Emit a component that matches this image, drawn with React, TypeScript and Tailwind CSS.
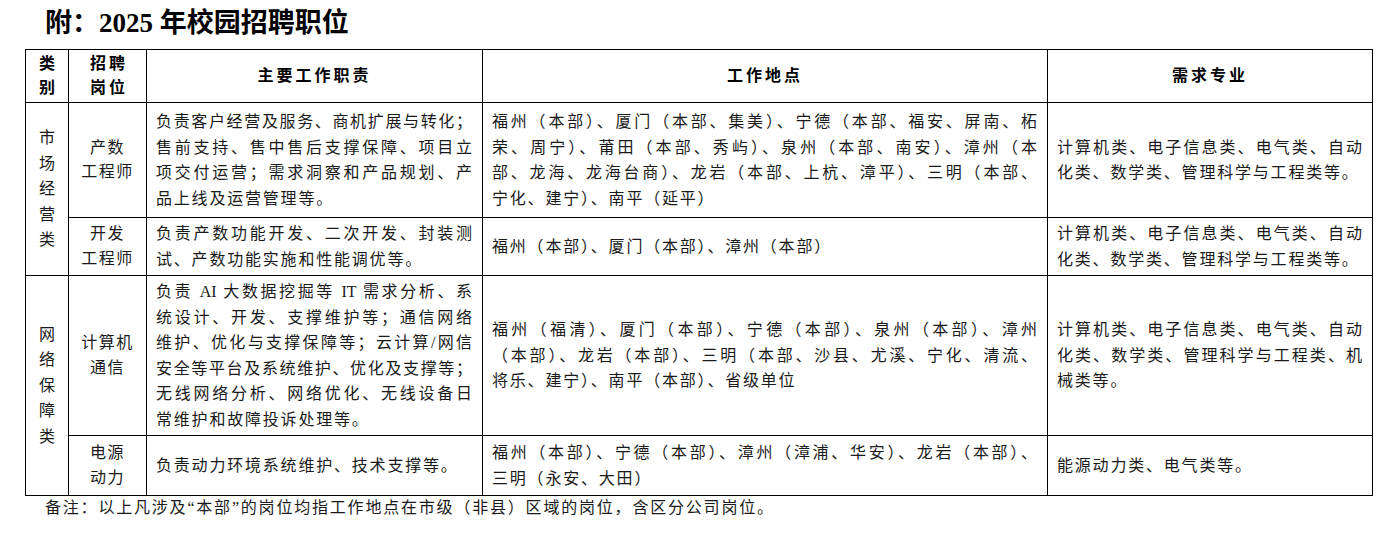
const serif = "font-['Liberation_Serif','Noto_Sans_CJK_SC',serif]";

type Row = {
  cat?: { text: string; span: number };
  pos: string[];
  duty: string[];
  place: string[];
  major: string[];
  h: string;
};

const majorsA = ["计算机类、电子信息类、电气类、自动", "化类、数学类、管理科学与工程类等。"];

const rows: Row[] = [
  {
    cat: { text: "市场经营类", span: 2 },
    pos: ["产数", "工程师"],
    duty: [
      "负责客户经营及服务、商机扩展与转化；",
      "售前支持、售中售后支撑保障、项目立",
      "项交付运营；需求洞察和产品规划、产",
      "品上线及运营管理等。",
    ],
    place: [
      "福州（本部）、厦门（本部、集美）、宁德（本部、福安、屏南、柘",
      "荣、周宁）、莆田（本部、秀屿）、泉州（本部、南安）、漳州（本",
      "部、龙海、龙海台商）、龙岩（本部、上杭、漳平）、三明（本部、",
      "宁化、建宁）、南平（延平）",
    ],
    major: majorsA,
    h: "h-[115px]",
  },
  {
    pos: ["开发", "工程师"],
    duty: ["负责产数功能开发、二次开发、封装测", "试、产数功能实施和性能调优等。"],
    place: ["福州（本部）、厦门（本部）、漳州（本部）"],
    major: majorsA,
    h: "h-[58px]",
  },
  {
    cat: { text: "网络保障类", span: 2 },
    pos: ["计算机", "通信"],
    duty: [
      "负责 AI 大数据挖掘等 IT 需求分析、系",
      "统设计、开发、支撑维护等；通信网络",
      "维护、优化与支撑保障等；云计算/网信",
      "安全等平台及系统维护、优化及支撑等；",
      "无线网络分析、网络优化、无线设备日",
      "常维护和故障投诉处理等。",
    ],
    place: [
      "福州（福清）、厦门（本部）、宁德（本部）、泉州（本部）、漳州",
      "（本部）、龙岩（本部）、三明（本部、沙县、尤溪、宁化、清流、",
      "将乐、建宁）、南平（本部）、省级单位",
    ],
    major: [
      "计算机类、电子信息类、电气类、自动",
      "化类、数学类、管理科学与工程类、机",
      "械类等。",
    ],
    h: "h-[160px]",
  },
  {
    pos: ["电源", "动力"],
    duty: ["负责动力环境系统维护、技术支撑等。"],
    place: ["福州（本部）、宁德（本部）、漳州（漳浦、华安）、龙岩（本部）、", "三明（永安、大田）"],
    major: ["能源动力类、电气类等。"],
    h: "h-[60px]",
  },
];

function Lines({ lines }: { lines: string[] }) {
  return (
    <>
      {lines.map((l, i) =>
        i < lines.length - 1 ? (
          <div key={i} className="text-justify [text-align-last:justify]">
            {l}
          </div>
        ) : (
          <div key={i} className="tracking-[1.8px]">
            {l}
          </div>
        )
      )}
    </>
  );
}

export default function App() {
  return (
    <div className={`min-h-screen bg-white text-[#1a1a1a] ${serif}`}>
      <div className="px-[25px]">
        {/* Title */}
        <div className="flex h-[46px] items-center pl-[20px] text-[27px] font-bold leading-none text-black">
          附：2025 年校园招聘职位
        </div>

        <table className="mt-[3px] w-[1347px] table-fixed border-collapse border border-black text-[16px] leading-[25.5px]">
          <colgroup>
            <col className="w-[43px]" />
            <col className="w-[78px]" />
            <col className="w-[336px]" />
            <col className="w-[565px]" />
            <col className="w-[325px]" />
          </colgroup>
          <thead>
            <tr className="h-[53px] text-center font-bold tracking-[3px] text-black">
              <td className="border border-black leading-[24.5px]">
                <div className="pl-[3px]">类</div>
                <div className="pl-[3px]">别</div>
              </td>
              <td className="border border-black leading-[24.5px]">
                <div className="pl-[3px]">招聘</div>
                <div className="pl-[3px]">岗位</div>
              </td>
              <td className="border border-black">主要工作职责</td>
              <td className="border border-black">工作地点</td>
              <td className="border border-black">需求专业</td>
            </tr>
          </thead>
          <tbody>
            {rows.map((r, i) => (
              <tr key={i} className={r.h}>
                {r.cat && (
                  <td rowSpan={r.cat.span} className="border border-black text-center align-middle leading-[25.5px]">
                    {r.cat.text.split("").map((c) => (
                      <div key={c + i}>{c}</div>
                    ))}
                  </td>
                )}
                <td className="border border-black text-center align-middle leading-[24.5px] tracking-[1.5px]">
                  {r.pos.map((p) => (
                    <div key={p}>{p}</div>
                  ))}
                </td>
                <td className="border border-black pl-[9px] pr-[10px] align-middle">
                  <Lines lines={r.duty} />
                </td>
                <td className="border border-black pl-[9px] pr-[10px] align-middle">
                  <Lines lines={r.place} />
                </td>
                <td className="border border-black pl-[9px] pr-[10px] align-middle">
                  <Lines lines={r.major} />
                </td>
              </tr>
            ))}
          </tbody>
        </table>

        {/* Note */}
        <div className="pl-[20px] text-[16px] leading-[24px] tracking-[1.8px]">
          备注：以上凡涉及“本部”的岗位均指工作地点在市级（非县）区域的岗位，含区分公司岗位。
        </div>
      </div>
    </div>
  );
}
